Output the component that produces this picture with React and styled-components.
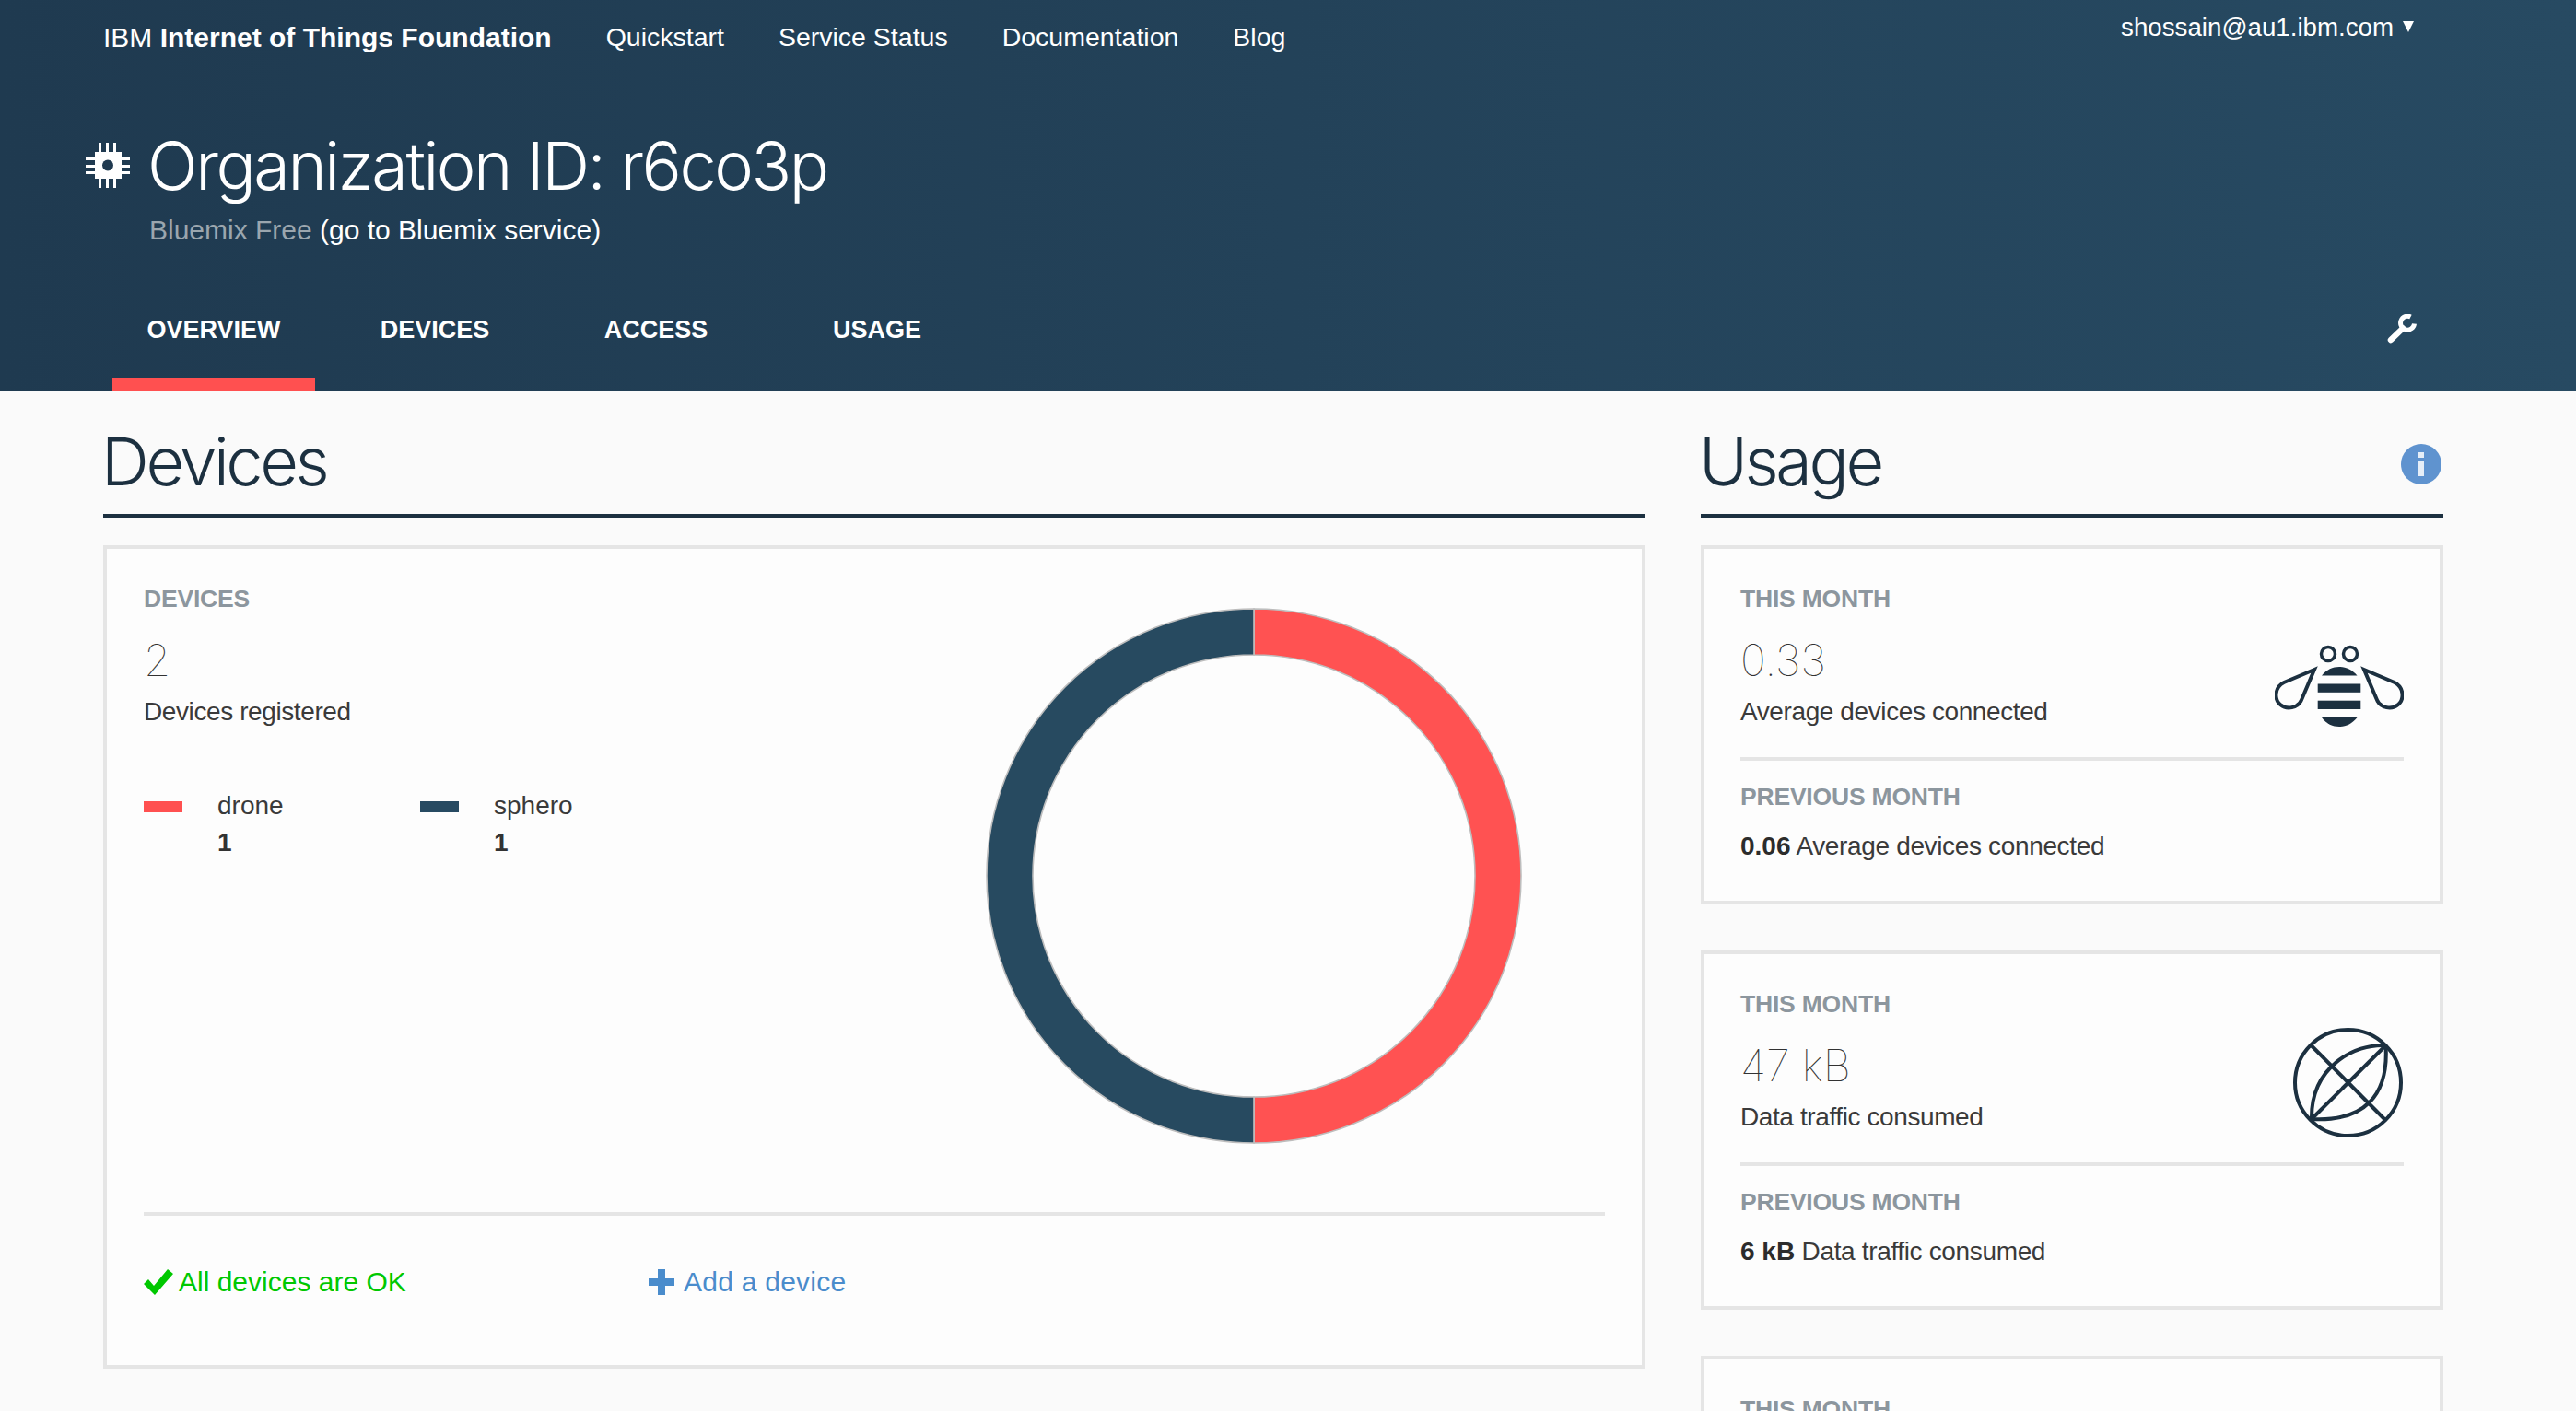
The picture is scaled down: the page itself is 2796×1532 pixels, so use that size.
import React from "react";
import styled, { createGlobalStyle } from "styled-components";

const Global = createGlobalStyle`
  html, body { margin: 0; padding: 0; height: 100%; overflow: hidden; background: #fafafa; }
  * { box-sizing: border-box; }
  body { font-family: "Liberation Sans", Arial, sans-serif; color: #323232; }
`;

const Page = styled.div`
  width: 2796px;
  height: 1532px;
  overflow: hidden;
  background: #fafafa;
`;

const Header = styled.header`
  height: 424px;
  background: linear-gradient(90deg, #1f3a50 0%, #274a62 100%);
  color: #fff;
  display: flex;
  flex-direction: column;
`;

const TopBar = styled.div`
  height: 82px;
  padding: 0 176px 0 112px;
  display: flex;
  align-items: flex-start;
`;

const Brand = styled.div`
  font-size: 30px;
  line-height: 82px;
  font-weight: 700;
  margin-right: 59px;
  span { font-weight: 400; }
`;

const NavLink = styled.a`
  font-size: 28.5px;
  line-height: 80px;
  color: #fff;
  margin-right: 59px;
`;

const User = styled.div`
  margin-left: auto;
  font-size: 27.7px;
  line-height: 60px;
  display: flex;
  align-items: center;
  gap: 10px;
`;

const Caret = styled.span`
  width: 0;
  height: 0;
  border-left: 6.5px solid transparent;
  border-right: 6.5px solid transparent;
  border-top: 12px solid #fff;
  margin-top: -3px;
`;

const TitleRow = styled.div`
  margin-top: 53px;
  padding-left: 93px;
  display: flex;
  align-items: center;
  gap: 19px;
`;

const Title = styled.h1`
  margin: 0;
  font-family: Inter, "Liberation Sans", sans-serif;
  font-weight: 300;
  font-size: 72px;
  line-height: 90px;
  letter-spacing: -2.45px;
`;

const Plan = styled.div`
  margin-top: 5px;
  padding-left: 162px;
  font-size: 30px;
  line-height: 40px;
`;

const PlanName = styled.span`
  color: #9ba6ae;
`;

const TabBar = styled.nav`
  margin-top: auto;
  padding: 0 173px 0 112px;
  display: flex;
  align-items: flex-start;
`;

const Tab = styled.a`
  width: 240px;
  height: 84px;
  padding: 0 10px;
  display: block;
  font-size: 27px;
  font-weight: 700;
  line-height: 37px;
  text-align: center;
  color: #fff;
`;

const TabLabel = styled.div`
  height: 84px;
  border-bottom: ${(p) => (p.$active ? "14px solid #ff5050" : "none")};
`;

const TabTools = styled.div`
  margin-left: auto;
  margin-top: 1px;
  line-height: 0;
`;

const Main = styled.main`
  padding: 0 144px 0 112px;
  display: grid;
  grid-template-columns: 1674px 806px;
  column-gap: 60px;
`;

const SectionHead = styled.div`
  height: 138px;
  padding-bottom: 12px;
  margin-bottom: 30px;
  border-bottom: 4px solid #1c3040;
  display: flex;
  align-items: flex-end;
  justify-content: space-between;
`;

const SectionTitle = styled.h2`
  margin: 0 0 0 -2px;
  font-family: Inter, "Liberation Sans", sans-serif;
  font-weight: 300;
  font-size: 72px;
  line-height: 90px;
  letter-spacing: -3.4px;
  color: #1c3040;
`;

const InfoDot = styled.div`
  width: 44px;
  height: 44px;
  margin: 0 2px 20px 0;
  border-radius: 50%;
  background: #5f93cf;
  position: relative;
  &::before {
    content: "";
    position: absolute;
    left: 19px;
    top: 9px;
    width: 6px;
    height: 6px;
    background: #e6eef7;
  }
  &::after {
    content: "";
    position: absolute;
    left: 19px;
    top: 18px;
    width: 6px;
    height: 17px;
    background: #e6eef7;
  }
`;

const Card = styled.section`
  border: 4px solid #e5e5e5;
  background: #fdfdfd;
  padding: 36px 39px 40px 39px;
`;

const DevicesCard = styled(Card)`
  height: 894px;
  padding: 36px 40px 0;
  display: flex;
  flex-direction: column;
`;

const DevicesTop = styled.div`
  flex: 1;
  display: flex;
  justify-content: space-between;
  align-items: flex-start;
`;

const Label = styled.div`
  font-size: 26.5px;
  font-weight: 700;
  line-height: 36px;
  letter-spacing: -0.2px;
  color: #8c969e;
`;

const Value = styled.div`
  font-family: Inter, "Liberation Sans", sans-serif;
  font-weight: 100;
  font-size: 47px;
  line-height: 56px;
  margin-top: 21px;
  color: #323232;
`;

const Desc = styled.div`
  font-size: 28px;
  line-height: 40px;
  letter-spacing: -0.4px;
  margin-top: 8px;
  color: #3a3a3a;
`;

const Legend = styled.div`
  margin-top: 62px;
  display: flex;
`;

const LegendItem = styled.div`
  width: 300px;
  display: flex;
  gap: 38px;
`;

const Swatch = styled.div`
  width: 42px;
  height: 12px;
  margin-top: 15px;
  background: ${(p) => p.$color};
`;

const LegendName = styled.div`
  font-size: 28px;
  line-height: 40px;
  color: #3a3a3a;
`;

const LegendCount = styled.div`
  font-size: 28px;
  font-weight: 700;
  line-height: 40px;
`;

const DonutSlot = styled.div`
  margin: 28px 90px 0 0;
  flex: none;
  line-height: 0;
`;

const Footer = styled.div`
  height: 166px;
  border-top: 4px solid #e5e5e5;
  padding-top: 52px;
  display: flex;
  align-items: flex-start;
  font-size: 30px;
  line-height: 40px;
`;

const Status = styled.div`
  width: 548px;
  color: #00c800;
  display: flex;
  align-items: center;
  gap: 6px;
`;

const AddLink = styled.a`
  color: #4a8ccc;
  letter-spacing: 0.25px;
  display: flex;
  align-items: center;
  gap: 10px;
`;

const UsageColumn = styled.div`
  display: flex;
  flex-direction: column;
  gap: 50px;
`;

const UsageCard = styled(Card)`
  height: 390px;
  flex: none;
`;

const UsageTop = styled.div`
  display: flex;
  justify-content: space-between;
  align-items: flex-end;
`;

const Rule = styled.div`
  height: 4px;
  margin: 29px 0 21px;
  background: #e5e5e5;
`;

const PrevLine = styled.div`
  margin-top: 16px;
  font-size: 28px;
  line-height: 40px;
  letter-spacing: -0.35px;
  color: #3a3a3a;
`;

const PrevValue = styled.b`
  font-weight: 700;
  color: #2c2c2c;
  letter-spacing: 0;
`;

const IconSlot = styled.div`
  line-height: 0;
  margin-bottom: ${(p) => p.$drop}px;
  margin-right: ${(p) => p.$inset}px;
`;

const Chip = () => (
  <svg width="48" height="50" viewBox="0 0 48 50" fill="#fff">
    <rect x="14" width="3" height="49" />
    <rect x="22" width="3" height="49" />
    <rect x="30" width="3" height="49" />
    <rect y="16" width="48" height="3" />
    <rect y="24" width="48" height="3" />
    <rect y="31" width="48" height="3" />
    <rect x="10" y="10" width="29" height="29" />
    <circle cx="24" cy="24.500" r="6" fill="#203a50" />
  </svg>
);

const Wrench = () => (
  <svg width="32" height="32" viewBox="0 0 32 32" fill="none" stroke="#fff">
    <path d="M4 28 L17 15.500" strokeWidth="6.500" strokeLinecap="round" />
    <path d="M25.500 3 A7.500 7.500 0 1 0 29.500 10.500" strokeWidth="5" />
  </svg>
);

const Donut = () => (
  <svg width="582" height="582" viewBox="0 0 582 582" strokeWidth="1.600" stroke="#bdbdbd">
    <path d="M291 1 A290 290 0 0 1 291 581 V531 A240 240 0 0 0 291 51 Z" fill="#ff5252" />
    <path d="M291 1 A290 290 0 0 0 291 581 V531 A240 240 0 0 1 291 51 Z" fill="#274a60" />
  </svg>
);

const Check = () => (
  <svg width="32" height="28" viewBox="0 0 32 28">
    <path d="M0 16 L5 11 L11 18 L26 0 L32 5 L12 28 Z" fill="#00c800" />
  </svg>
);

const Plus = () => (
  <svg width="28" height="28" viewBox="0 0 28 28">
    <path d="M10 0h8v10h10v8H18v10h-8V18H0v-8h10z" fill="#4a8ccc" />
  </svg>
);

const Bee = () => (
  <svg width="140" height="91" viewBox="28 20 140 91">
    <circle cx="86" cy="31" r="7.500" fill="none" stroke="#1c3040" strokeWidth="3.500" />
    <circle cx="110" cy="31" r="7.500" fill="none" stroke="#1c3040" strokeWidth="3.500" />
    <path d="M79 54.500 C84 48 91 45 98 45 C105 45 112 48 117.500 54.500 Z" fill="#1c3040" />
    <rect x="74.700" y="63.500" width="46.600" height="9.300" fill="#1c3040" />
    <rect x="74.700" y="81.700" width="46.600" height="9.300" fill="#1c3040" />
    <path d="M79 100 H117.500 C112 107 105 110 98 110 C91 110 84 107 79 100 Z" fill="#1c3040" />
    <g fill="none" stroke="#1c3040" strokeWidth="4" strokeLinejoin="miter">
      <path d="M71 48 L38 62 C28 67 27 80 34 86 C41 92 53 90 57 81 Z" />
      <path d="M125 48 L158 62 C168 67 169 80 162 86 C155 92 143 90 139 81 Z" />
    </g>
  </svg>
);

const Globe = () => (
  <svg width="119" height="119" viewBox="18 16 119 119">
    <g fill="none" stroke="#1c3040" strokeWidth="4">
      <circle cx="77.500" cy="75.500" r="57.500" />
      <path d="M37.500 35 L118.500 116.500" />
      <path d="M118.500 35 L38 115" />
      <path d="M118.500 35 C85 33 37 58 38 115" />
      <path d="M118.500 35 C122 90 95 118 38 115" />
    </g>
  </svg>
);

const navItems = ["Quickstart", "Service Status", "Documentation", "Blog"];
const tabs = ["OVERVIEW", "DEVICES", "ACCESS", "USAGE"];

function Usage({ value, desc, prev, Icon, drop, inset }) {
  return (
    <UsageCard>
      <UsageTop>
        <div>
          <Label>THIS MONTH</Label>
          <Value>{value}</Value>
          <Desc>{desc}</Desc>
        </div>
        <IconSlot $drop={drop} $inset={inset}>
          <Icon />
        </IconSlot>
      </UsageTop>
      <Rule />
      <Label>PREVIOUS MONTH</Label>
      <PrevLine>
        <PrevValue>{prev}</PrevValue> {desc}
      </PrevLine>
    </UsageCard>
  );
}

export default function App() {
  return (
    <Page>
      <Global />
      <Header>
        <TopBar>
          <Brand>
            <span>IBM</span> Internet of Things Foundation
          </Brand>
          {navItems.map((n) => (
            <NavLink key={n}>{n}</NavLink>
          ))}
          <User>
            shossain@au1.ibm.com <Caret />
          </User>
        </TopBar>
        <TitleRow>
          <Chip />
          <Title>Organization ID: r6co3p</Title>
        </TitleRow>
        <Plan>
          <PlanName>Bluemix Free</PlanName> (go to Bluemix service)
        </Plan>
        <TabBar>
          {tabs.map((t, i) => (
            <Tab key={t}>
              <TabLabel $active={i === 0}>{t}</TabLabel>
            </Tab>
          ))}
          <TabTools>
            <Wrench />
          </TabTools>
        </TabBar>
      </Header>
      <Main>
        <div>
          <SectionHead>
            <SectionTitle>Devices</SectionTitle>
          </SectionHead>
          <DevicesCard>
            <DevicesTop>
              <div>
                <Label>DEVICES</Label>
                <Value>2</Value>
                <Desc>Devices registered</Desc>
                <Legend>
                  <LegendItem>
                    <Swatch $color="#ff5050" />
                    <div>
                      <LegendName>drone</LegendName>
                      <LegendCount>1</LegendCount>
                    </div>
                  </LegendItem>
                  <LegendItem>
                    <Swatch $color="#274a62" />
                    <div>
                      <LegendName>sphero</LegendName>
                      <LegendCount>1</LegendCount>
                    </div>
                  </LegendItem>
                </Legend>
              </div>
              <DonutSlot>
                <Donut />
              </DonutSlot>
            </DevicesTop>
            <Footer>
              <Status>
                <Check /> All devices are OK
              </Status>
              <AddLink>
                <Plus /> Add a device
              </AddLink>
            </Footer>
          </DevicesCard>
        </div>
        <div>
          <SectionHead>
            <SectionTitle>Usage</SectionTitle>
            <InfoDot />
          </SectionHead>
          <UsageColumn>
            <Usage value="0.33" desc="Average devices connected" prev="0.06" Icon={Bee} drop={3} inset={0} />
            <Usage value="47 kB" desc="Data traffic consumed" prev="6 kB" Icon={Globe} drop={-2} inset={1} />
            <UsageCard>
              <Label>THIS MONTH</Label>
            </UsageCard>
          </UsageColumn>
        </div>
      </Main>
    </Page>
  );
}
